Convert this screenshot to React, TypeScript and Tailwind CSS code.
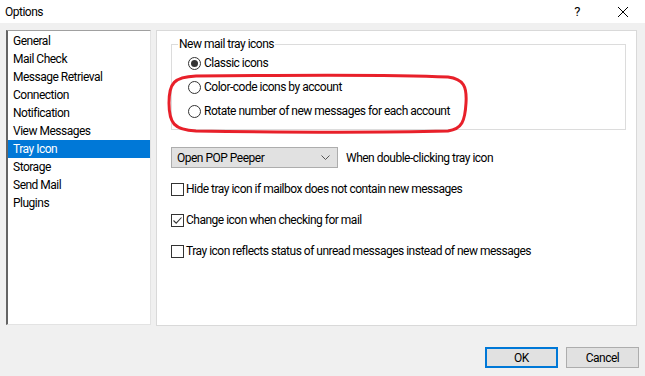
import { useState } from 'react';

const pages = [
  'General',
  'Mail Check',
  'Message Retrieval',
  'Connection',
  'Notification',
  'View Messages',
  'Tray Icon',
  'Storage',
  'Send Mail',
  'Plugins',
];

function Radio({ checked, label }: { checked?: boolean; label: string }) {
  return (
    <div className="flex h-[18px] items-center gap-[3px]">
      <span className="flex h-[13px] w-[13px] items-center justify-center rounded-full border border-[#333] bg-white">
        {checked && <span className="h-[7px] w-[7px] rounded-full bg-[#333]" />}
      </span>
      <span>{label}</span>
    </div>
  );
}

function Check({ checked, label }: { checked?: boolean; label: string }) {
  return (
    <div className="flex h-[18px] items-center gap-[2px]">
      <span className="flex h-[13px] w-[13px] items-center justify-center border border-[#333] bg-white">
        {checked && (
          <svg width="11" height="11" viewBox="0 0 11 11">
            <path d="M1.5 5.5 L4.2 8.2 L9.5 2.5" fill="none" stroke="#333" strokeWidth="1.1" />
          </svg>
        )}
      </span>
      <span>{label}</span>
    </div>
  );
}

export default function App() {
  const [selected] = useState('Tray Icon');

  return (
    <div
      className="flex h-[376px] w-[645px] flex-col bg-[#f0f0f0] text-[12px] leading-none tracking-[-0.5px] text-black"
      style={{ fontFamily: '"Segoe UI", Roboto, "Noto Sans", sans-serif' }}
    >
      {/* Title bar */}
      <div className="flex h-[23px] items-center bg-white pl-[5px]">
        <span className="flex-1">Options</span>
        <span className="mr-[37px] text-[13px]">?</span>
        <svg width="12" height="12" viewBox="0 0 12 12" className="mr-[16px]">
          <path d="M1 1 L11 11 M11 1 L1 11" stroke="#000" strokeWidth="1" />
        </svg>
      </div>

      {/* Body */}
      <div className="flex gap-[5px] pl-[6px] pr-[8px] pt-[7px]">
        {/* Page list */}
        <div className="h-[295px] w-[145px] border-b border-l-2 border-r border-t border-b-[#e3e3e3] border-l-[#646464] border-r-[#e3e3e3] border-t-[#a0a0a0] bg-white pt-[1px]">
          {pages.map((p) => (
            <div
              key={p}
              className={
                p === selected
                  ? 'flex h-[18px] items-center bg-[#0078d7] pl-[5px] text-white'
                  : 'flex h-[18px] items-center pl-[5px]'
              }
            >
              {p}
            </div>
          ))}
        </div>

        {/* Settings panel */}
        <div className="relative h-[296px] flex-1 border border-[#d9d9d9] bg-white pl-[14px] pr-[10px] pt-[13px]">
          <div className="relative h-[86px] border border-[#dcdcdc] pl-[16px] pt-[9px]">
            <span className="absolute left-[6px] top-[-7px] bg-white px-[1px]">New mail tray icons</span>
            <div className="flex flex-col gap-[6px]">
              <Radio checked label="Classic icons" />
              <Radio label="Color-code icons by account" />
              <Radio label="Rotate number of new messages for each account" />
            </div>
          </div>

          <div className="mt-[17px] flex items-center gap-[8px]">
            <div className="flex h-[21px] w-[167px] items-center justify-between border border-[#adadad] bg-[#e1e1e1] pl-[5px] pr-[7px]">
              <span>Open POP Peeper</span>
              <svg width="9" height="6" viewBox="0 0 9 6">
                <path d="M0.5 0.5 L4.5 4.5 L8.5 0.5" fill="none" stroke="#555" strokeWidth="1" />
              </svg>
            </div>
            <span>When double-clicking tray icon</span>
          </div>

          <div className="mt-[12px] flex flex-col gap-[13px]">
            <Check label="Hide tray icon if mailbox does not contain new messages" />
            <Check checked label="Change icon when checking for mail" />
            <Check label="Tray icon reflects status of unread messages instead of new messages" />
          </div>

          {/* Red annotation */}
          <svg className="pointer-events-none absolute left-[9px] top-[42px]" width="304" height="62" viewBox="0 0 304 62">
            <path
              d="M30 3 C120 2 220 1 282 4 C298 6 301 14 300 30 C299 48 296 56 282 58 C200 60 100 59 30 58 C8 57 3 50 3 30 C3 10 8 4 30 3 Z"
              fill="none"
              stroke="#e8202a"
              strokeWidth="3"
            />
          </svg>
        </div>
      </div>

      {/* Buttons */}
      <div className="mt-[21px] flex justify-end gap-[8px] pr-[6px]">
        <button className="h-[21px] w-[73px] border-2 border-[#0078d7] bg-[#e1e1e1]">OK</button>
        <button className="h-[21px] w-[73px] border border-[#adadad] bg-[#e1e1e1]">Cancel</button>
      </div>
    </div>
  );
}
